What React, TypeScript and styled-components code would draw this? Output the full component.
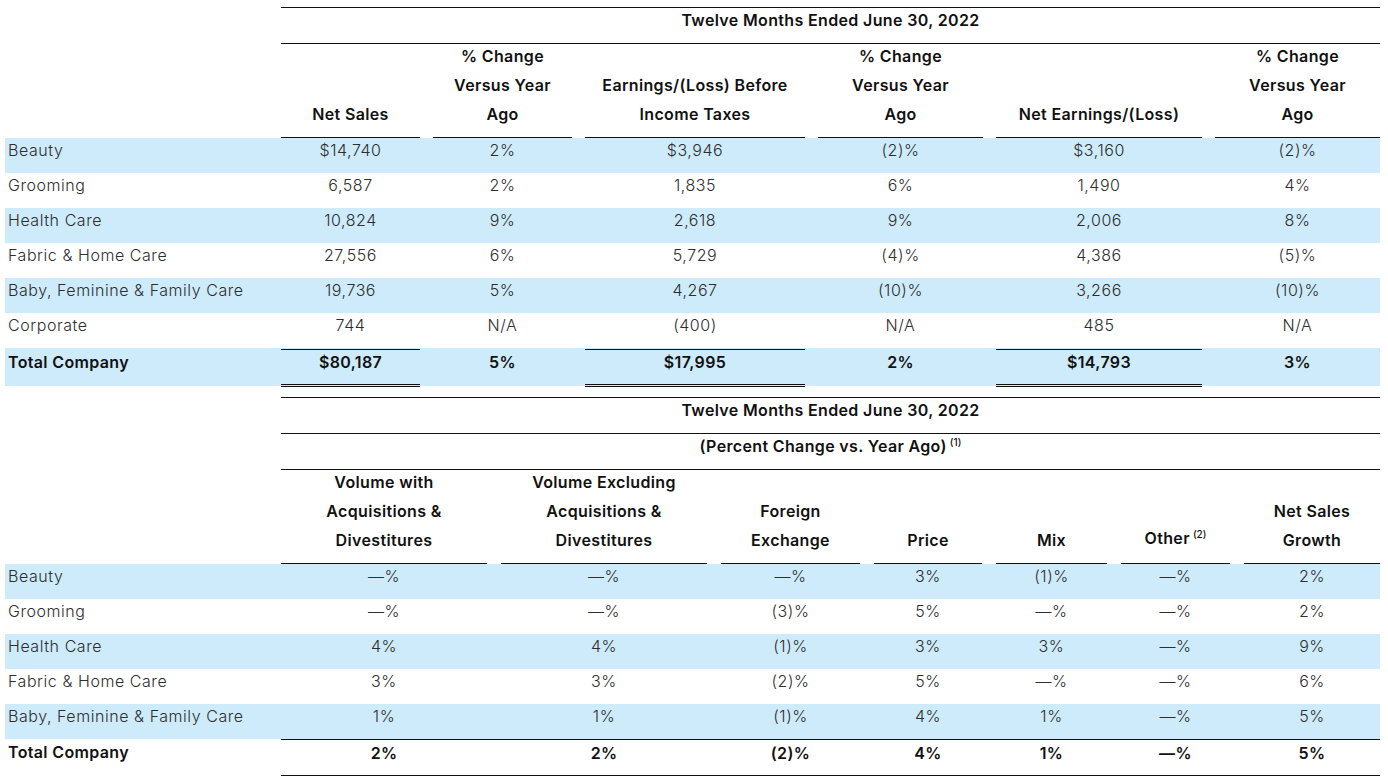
import React from "react";
import styled, { createGlobalStyle, css } from "styled-components";

const Global = createGlobalStyle`
  html, body { margin: 0; padding: 0; background: #ffffff; }
  body { font-family: Inter, "Open Sans", sans-serif; color: #2e2e2e; }
`;

const BAND = "#cdebfb";
const T1_COLS = "263px 139px 139px 220px 165px 206px 165px";
const T2_COLS = "262px 206px 206px 139px 108px 111px 109px 136px";

const Page = styled.div`
  width: 1375px;
  padding: 7px 0 0 5px;
  display: flex;
  flex-direction: column;
  gap: 11px;
`;

const Table = styled.div`
  display: flex;
  flex-direction: column;
`;

const TitleRow = styled.div<{ $top?: boolean }>`
  margin-left: 276px;
  height: 35px;
  border-bottom: 1px solid #111;
  ${(p) => p.$top && css`border-top: 1px solid #111;`}
  font-size: 16px;
  font-weight: 600;
  letter-spacing: 0.35px;
  color: #111;
  text-align: center;
  line-height: 25px;
`;

const Sup = styled.sup`
  font-size: 10px;
  font-weight: 500;
  letter-spacing: 0;
  vertical-align: 0;
  position: relative;
  top: -6px;
  margin-left: 3px;
`;

const Grid = styled.div<{ $cols: string; $gap: number }>`
  display: grid;
  grid-template-columns: ${(p) => p.$cols};
  column-gap: ${(p) => p.$gap}px;
`;

const HeadRow = styled(Grid)`
  height: 94px;
  grid-template-rows: 94px;
  align-items: end;
`;

const HeadCell = styled.div`
  margin-top: -8px;
  font-size: 16px;
  font-weight: 600;
  letter-spacing: 0.35px;
  color: #111;
  text-align: center;
  line-height: 29px;
  padding-bottom: 8px;
  border-bottom: 1px solid #111;
  white-space: nowrap;
`;

const HeadSpacer = styled.div``;

const DataRow = styled(Grid)<{ $band?: boolean; $total?: boolean }>`
  height: 35px;
  box-sizing: border-box;
  background: ${(p) => (p.$band ? BAND : "transparent")};
  font-size: 16px;
  font-weight: 300;
  letter-spacing: 0.55px;
  line-height: 24px;
  ${(p) =>
    p.$total &&
    css`
      height: 38px;
      padding-top: 1px;
      font-weight: 600;
      letter-spacing: 0.35px;
      color: #111;
    `}
`;

const Label = styled.div<{ $pad?: boolean }>`
  padding-left: 3px;
  white-space: nowrap;
  ${(p) => p.$pad && css`padding-top: 1px;`}
`;

const Value = styled.div<{ $top?: boolean; $double?: boolean; $pad?: boolean }>`
  text-align: center;
  white-space: nowrap;
  box-sizing: border-box;
  ${(p) => p.$pad && css`padding-top: 1px;`}
  ${(p) => p.$top && css`border-top: 1px solid #111;`}
  ${(p) =>
    p.$double &&
    css`
      position: relative;
      &::after {
        content: "";
        position: absolute;
        left: 0;
        right: 0;
        bottom: -1px;
        height: 1px;
        border-top: 1px solid #111;
        border-bottom: 1px solid #111;
      }
    `}
`;

const Total2 = styled(Grid)`
  height: 37px;
  font-size: 16px;
  font-weight: 600;
  letter-spacing: 0.35px;
  line-height: 26px;
  color: #111;
`;

const RuleCells = styled.div`
  grid-column: 2 / -1;
  display: grid;
  grid-template-columns: subgrid;
  border-top: 1px solid #111;
  border-bottom: 1px solid #111;
  height: 35px;
`;

type Row = { label: string; vals: string[] };

const t1Rows: Row[] = [
  { label: "Beauty", vals: ["$14,740", "2%", "$3,946", "(2)%", "$3,160", "(2)%"] },
  { label: "Grooming", vals: ["6,587", "2%", "1,835", "6%", "1,490", "4%"] },
  { label: "Health Care", vals: ["10,824", "9%", "2,618", "9%", "2,006", "8%"] },
  { label: "Fabric & Home Care", vals: ["27,556", "6%", "5,729", "(4)%", "4,386", "(5)%"] },
  { label: "Baby, Feminine & Family Care", vals: ["19,736", "5%", "4,267", "(10)%", "3,266", "(10)%"] },
  { label: "Corporate", vals: ["744", "N/A", "(400)", "N/A", "485", "N/A"] },
];
const t1Total: Row = { label: "Total Company", vals: ["$80,187", "5%", "$17,995", "2%", "$14,793", "3%"] };

const t2Rows: Row[] = [
  { label: "Beauty", vals: ["—%", "—%", "—%", "3%", "(1)%", "—%", "2%"] },
  { label: "Grooming", vals: ["—%", "—%", "(3)%", "5%", "—%", "—%", "2%"] },
  { label: "Health Care", vals: ["4%", "4%", "(1)%", "3%", "3%", "—%", "9%"] },
  { label: "Fabric & Home Care", vals: ["3%", "3%", "(2)%", "5%", "—%", "—%", "6%"] },
  { label: "Baby, Feminine & Family Care", vals: ["1%", "1%", "(1)%", "4%", "1%", "—%", "5%"] },
];
const t2Total: Row = { label: "Total Company", vals: ["2%", "2%", "(2)%", "4%", "1%", "—%", "5%"] };

const t1Heads: React.ReactNode[] = [
  <>Net Sales</>,
  <>% Change<br />Versus Year<br />Ago</>,
  <>Earnings/(Loss) Before<br />Income Taxes</>,
  <>% Change<br />Versus Year<br />Ago</>,
  <>Net Earnings/(Loss)</>,
  <>% Change<br />Versus Year<br />Ago</>,
];

const t2Heads: React.ReactNode[] = [
  <>Volume with<br />Acquisitions &amp;<br />Divestitures</>,
  <>Volume Excluding<br />Acquisitions &amp;<br />Divestitures</>,
  <>Foreign<br />Exchange</>,
  <>Price</>,
  <>Mix</>,
  <>Other<Sup>(2)</Sup></>,
  <>Net Sales<br />Growth</>,
];

const money = [0, 2, 4];

export default function App() {
  return (
    <>
      <Global />
      <Page>
        <Table>
          <TitleRow $top>Twelve Months Ended June 30, 2022</TitleRow>
          <HeadRow $cols={T1_COLS} $gap={13}>
            <HeadSpacer />
            {t1Heads.map((h, i) => (
              <HeadCell key={i}>{h}</HeadCell>
            ))}
          </HeadRow>
          {t1Rows.map((r, ri) => (
            <DataRow key={r.label} $cols={T1_COLS} $gap={13} $band={ri % 2 === 0}>
              <Label>{r.label}</Label>
              {r.vals.map((v, i) => (
                <Value key={i}>{v}</Value>
              ))}
            </DataRow>
          ))}
          <DataRow $cols={T1_COLS} $gap={13} $band $total>
            <Label $pad>{t1Total.label}</Label>
            {t1Total.vals.map((v, i) => (
              <Value
                key={i}
                $top={money.includes(i)}
                $double={money.includes(i)}
                $pad={!money.includes(i)}
              >
                {v}
              </Value>
            ))}
          </DataRow>
        </Table>

        <Table>
          <TitleRow $top>Twelve Months Ended June 30, 2022</TitleRow>
          <TitleRow>
            (Percent Change vs. Year Ago)<Sup>(1)</Sup>
          </TitleRow>
          <HeadRow $cols={T2_COLS} $gap={14}>
            <HeadSpacer />
            {t2Heads.map((h, i) => (
              <HeadCell key={i}>{h}</HeadCell>
            ))}
          </HeadRow>
          {t2Rows.map((r, ri) => (
            <DataRow key={r.label} $cols={T2_COLS} $gap={14} $band={ri % 2 === 0}>
              <Label>{r.label}</Label>
              {r.vals.map((v, i) => (
                <Value key={i}>{v}</Value>
              ))}
            </DataRow>
          ))}
          <Total2 $cols={T2_COLS} $gap={14}>
            <Label>{t2Total.label}</Label>
            <RuleCells>
              {t2Total.vals.map((v, i) => (
                <Value key={i}>{v}</Value>
              ))}
            </RuleCells>
          </Total2>
        </Table>
      </Page>
    </>
  );
}
